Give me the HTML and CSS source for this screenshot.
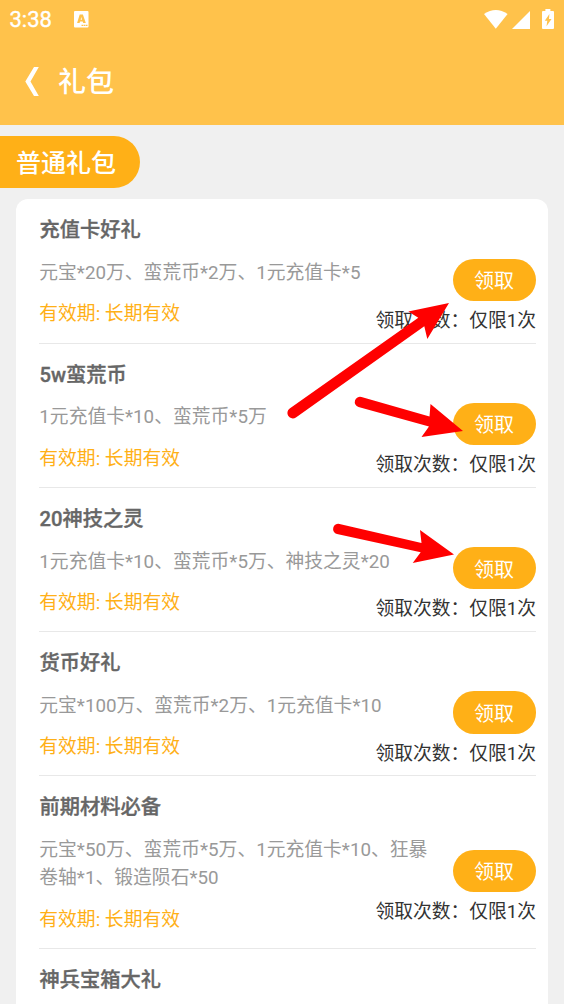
FILE: index.html
```
<!DOCTYPE html>
<html lang="zh-CN">
<head>
<meta charset="utf-8">
<title>礼包</title>
<link rel="stylesheet" href="styles.css">
</head>
<body>
<header class="header">
  <div class="status">
    <span class="time">3:38</span>
    <svg class="app-icon" width="15" height="17" viewBox="0 0 15 17"><rect width="14.500" height="16.5" rx="1" fill="#fff"/><path fill="#ffc24b" fill-rule="evenodd" d="M5.700 3.400h3.200l2.900 8.600H9.200l-.5-1.500H6l-.4 1.500H3.100zM7.300 6 6.600 8.700H8z"/><path d="M7.5 14.300H14" stroke="#ffc24b" stroke-width="1.3" stroke-dasharray="1.6 .5"/></svg>
    <div class="system">
      <svg class="wifi" width="24" height="19" viewBox="0 0 24 19"><path fill="#fff" d="M0 3.9Q11.8-3.7 23.6 3.9L11.8 18.7z"/></svg>
      <svg class="signal" width="18" height="18" viewBox="0 0 18 18"><path fill="#fff" d="M0 18 18 0v18z"/></svg>
      <svg class="battery" width="12" height="20" viewBox="0 0 12 20"><path fill="#fff" d="M3.4 0h5v2H11q1 0 1 1v16q0 1-1 1H1q-1 0-1-1V3q0-1 1-1h2.400z"/><path fill="#ffc24b" d="M7.400 5 2.800 11.800h2.500L4.500 17.300 9.500 10H7z"/></svg>
    </div>
  </div>
  <nav class="nav">
    <svg class="back" width="15" height="29" viewBox="0 0 15 29"><path fill="#fff" d="M9 0H13.800L5.500 14.500 13.800 29H9L.3 14.500z"/></svg>
    <h1 class="title">礼包</h1>
  </nav>
</header>
<main class="main">
  <h2 class="tag">普通礼包</h2>
  <section class="card">
    <article class="item">
      <h3 class="name">充值卡好礼</h3>
      <div class="body">
        <div class="info"><p class="desc">元宝*20万、蛮荒币*2万、1元充值卡*5</p><p class="valid">有效期: 长期有效</p></div>
        <div class="side"><button class="claim">领取</button><p class="limit">领取次数：仅限1次</p></div>
      </div>
    </article>
    <article class="item">
      <h3 class="name">5w蛮荒币</h3>
      <div class="body">
        <div class="info"><p class="desc">1元充值卡*10、蛮荒币*5万</p><p class="valid">有效期: 长期有效</p></div>
        <div class="side"><button class="claim">领取</button><p class="limit">领取次数：仅限1次</p></div>
      </div>
    </article>
    <article class="item">
      <h3 class="name">20神技之灵</h3>
      <div class="body">
        <div class="info"><p class="desc">1元充值卡*10、蛮荒币*5万、神技之灵*20</p><p class="valid">有效期: 长期有效</p></div>
        <div class="side"><button class="claim">领取</button><p class="limit">领取次数：仅限1次</p></div>
      </div>
    </article>
    <article class="item">
      <h3 class="name">货币好礼</h3>
      <div class="body">
        <div class="info"><p class="desc">元宝*100万、蛮荒币*2万、1元充值卡*10</p><p class="valid">有效期: 长期有效</p></div>
        <div class="side"><button class="claim">领取</button><p class="limit">领取次数：仅限1次</p></div>
      </div>
    </article>
    <article class="item">
      <h3 class="name">前期材料必备</h3>
      <div class="body">
        <div class="info"><p class="desc">元宝*50万、蛮荒币*5万、1元充值卡*10、狂暴<br>卷轴*1、锻造陨石*50</p><p class="valid">有效期: 长期有效</p></div>
        <div class="side"><button class="claim">领取</button><p class="limit">领取次数：仅限1次</p></div>
      </div>
    </article>
    <article class="item">
      <h3 class="name">神兵宝箱大礼</h3>
    </article>
  </section>
</main>
<svg class="arrows" width="564" height="1004" viewBox="0 0 564 1004">
  <g fill="#f00">
    <path d="M289.700 408.500 418.300 317.800 408.300 311.500 449 303 427.300 339 424.300 326.300 295.900 417.400A5.300 5.300 0 0 1 289.700 408.500z"/>
    <path d="M361.500 397 429.500 416.500 430.500 404 463 431 421.500 437 429 426.500 358.500 407A5 5 0 0 1 361.500 397z"/>
    <path d="M339.500 524 421.500 543 420 530 454 554.500 412.700 563 420.700 552.300 337 534A5 5 0 0 1 339.500 524z"/>
  </g>
</svg>
</body>
</html>
```

FILE: styles.css
```
* { box-sizing: border-box; margin: 0; padding: 0; }

body {
  width: 564px;
  height: 1004px;
  overflow: hidden;
  background: #f0f0f0;
  font-family: Roboto, "Noto Sans CJK SC", sans-serif;
}

.header { height: 125.400px; background: #ffc24b; color: #fff; }

.status { display: flex; align-items: center; height: 38px; padding: 0 10px 0 9.500px; }
.time { width: 64px; font-size: 22px; line-height: 38px; font-weight: 400; padding-top: 1px; -webkit-text-stroke: 0.4px; }
.system { display: flex; align-items: flex-end; margin-left: auto; height: 20px; }
.signal { margin: 0 12px 0 4.500px; }

.nav { display: flex; align-items: center; height: 87px; padding-left: 25px; }
.title { margin-left: 18px; padding-top: 2px; font-size: 28px; font-weight: 500; line-height: 40px; }

.tag {
  width: 139.500px;
  height: 51.500px;
  margin-top: 11px;
  padding: 2px 0 0 16px;
  border-radius: 0 26px 26px 0;
  background: #ffb017;
  color: #fff;
  font-size: 25px;
  font-weight: 500;
  line-height: 52px;
}

.card { margin: 11px 16px 0; padding: 0.400px 12px 0 23px; height: 850px; border-radius: 12px; background: #fff; }

.item { padding: 17px 0 7.300px; border-bottom: 1px solid #e8e8e8; }
.item:last-child { border-bottom: 0; }
.name { padding-left: 0.500px; font-size: 20.250px; font-weight: 500; line-height: 28px; color: #666; -webkit-text-stroke: 0.35px; }
.body { display: flex; align-items: center; margin-top: 14px; }
.info { flex: 1; padding: 0.700px 0 6.800px 0.300px; font-size: 18.800px; line-height: 28px; white-space: nowrap; }
.desc { color: #999; }
.valid { margin-top: 13.500px; color: #ffb017; }
.side { display: flex; flex-direction: column; align-items: flex-end; gap: 6px; margin: 0 0 0 -60px; }
.claim {
  width: 83px;
  height: 42.300px;
  border: 0;
  border-radius: 21px;
  background: #ffb017;
  color: #fff;
  font: 20px/42px Roboto, "Noto Sans CJK SC", sans-serif;
  padding: 1.500px 1px 0 0;
}
.limit { font-size: 18.750px; line-height: 28px; color: #333; }

.arrows { position: absolute; top: 0; left: 0; pointer-events: none; }
```
